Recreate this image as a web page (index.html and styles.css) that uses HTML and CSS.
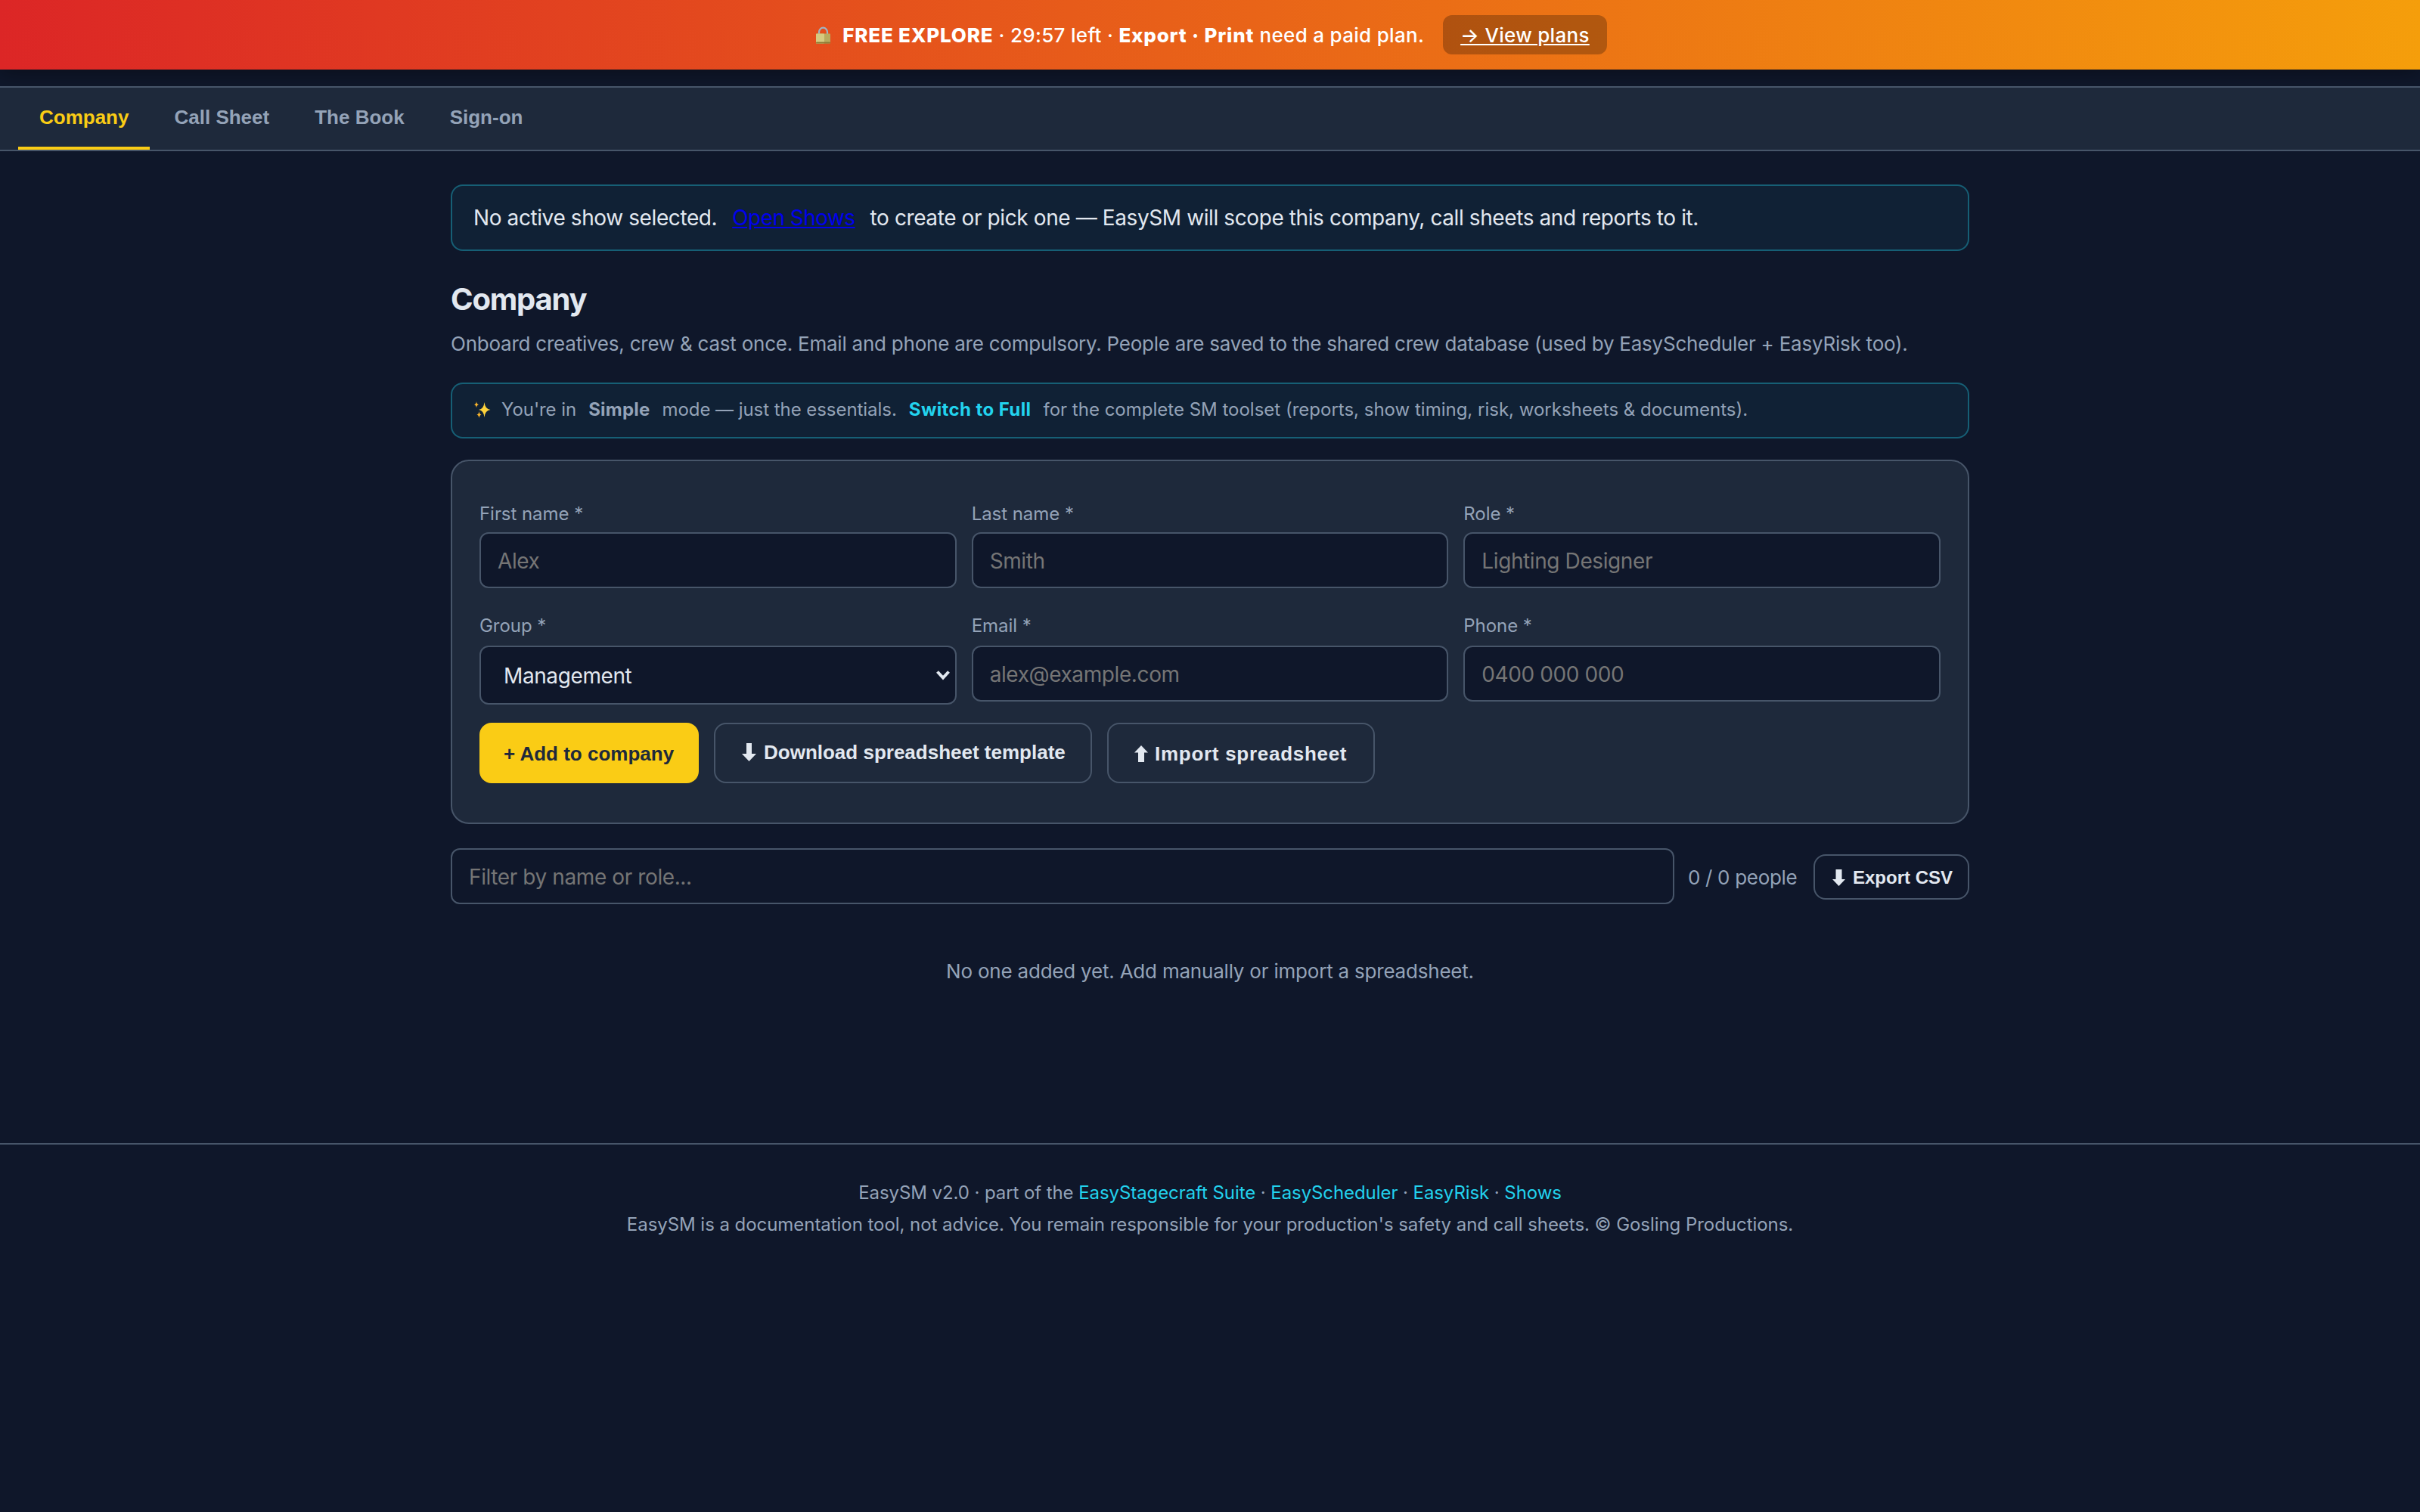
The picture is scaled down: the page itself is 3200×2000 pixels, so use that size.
FILE: index.html
```html
<!DOCTYPE html>
<html lang="en">
<head>
    <meta charset="UTF-8">
    <meta name="viewport" content="width=device-width, initial-scale=1.0">
    <title>EasySM - Company</title>
    <link rel="stylesheet" href="styles.css">
</head>
<body>
    <div class="trial-bar">
        <svg class="lock" viewBox="0 0 19 23">
            <path d="M4 11V7.500a5.500 5.800 0 0 1 11 0V11" fill="none" stroke="#9fb4c4" stroke-width="2.2"/>
            <rect x="0" y="9.5" width="19" height="13" rx="1" fill="#b9ab5e"/>
            <rect x="0" y="9.5" width="11" height="13" rx="1" fill="#d6ca80"/>
            <rect x="0" y="20.5" width="19" height="2" rx="1" fill="#8d7a35"/>
        </svg>
        <div class="trial-text"><strong>FREE EXPLORE</strong> · 29:57 left · <strong>Export · Print</strong> need a paid plan.</div>
        <a class="plans-link" href="#">→ View plans</a>
    </div>

    <nav class="tabs">
        <button class="tab active">Company</button>
        <button class="tab">Call Sheet</button>
        <button class="tab">The Book</button>
        <button class="tab">Sign-on</button>
    </nav>

    <main>
        <div class="notice">
            <span>No active show selected.</span>
            <a class="shows-link" href="#">Open Shows</a>
            <span>to create or pick one — EasySM will scope this company, call sheets and reports to it.</span>
        </div>

        <h1>Company</h1>
        <p class="lead">Onboard creatives, crew &amp; cast once. Email and phone are compulsory. People are saved to the shared crew database (used by EasyScheduler + EasyRisk too).</p>

        <div class="notice mode-notice">
            <svg class="sparkles" viewBox="0 0 22 22">
                <path d="M13.5 1Q14.3 10 21.500 11Q14.300 12 13.500 21Q12.700 12 6 11Q12.700 10 13.500 1Z" fill="#fdd23c"/>
                <path d="M3 0Q3.500 3.800 6 4.300Q3.500 4.800 3 8.500Q2.500 4.800 0 4.300Q2.500 3.800 3 0Z" fill="#fbb52c"/>
                <path d="M6.500 13Q7 17 9.500 17.500Q7 18 6.500 22Q6 18 3.500 17.500Q6 17 6.500 13Z" fill="#fbb52c"/>
            </svg>
            <span>You're in</span>
            <strong>Simple</strong>
            <span>mode — just the essentials.</span>
            <a class="switch-link" href="#">Switch to Full</a>
            <span class="mode-rest">for the complete SM toolset (reports, show timing, risk, worksheets &amp; documents).</span>
        </div>

        <div class="card">
            <div class="form-grid">
                <div class="field">
                    <label for="firstName">First name *</label>
                    <input id="firstName" type="text" placeholder="Alex">
                </div>
                <div class="field">
                    <label for="lastName">Last name *</label>
                    <input id="lastName" type="text" placeholder="Smith">
                </div>
                <div class="field">
                    <label for="role">Role *</label>
                    <input id="role" type="text" placeholder="Lighting Designer">
                </div>
            </div>
            <div class="form-grid form-grid-second">
                <div class="field">
                    <label for="group">Group *</label>
                    <div class="select-wrap">
                        <select id="group">
                            <option>Management</option>
                        </select>
                        <svg class="chevron" viewBox="0 0 20 14"><path d="M2.500 2.500L10 10.500L17.500 2.500" fill="none" stroke="#e2e8f0" stroke-width="4"/></svg>
                    </div>
                </div>
                <div class="field">
                    <label for="email">Email *</label>
                    <input id="email" type="email" placeholder="alex@example.com">
                </div>
                <div class="field">
                    <label for="phone">Phone *</label>
                    <input id="phone" type="tel" placeholder="0400 000 000">
                </div>
            </div>
            <div class="actions">
                <button class="btn btn-primary">+ Add to company</button>
                <button class="btn btn-download">
                    <svg class="arrow-lg" viewBox="0 0 19 24"><path d="M6 0h7v14h6L9.500 24 0 14h6z"/></svg>
                    Download spreadsheet template
                </button>
                <button class="btn btn-import">
                    <svg class="arrow-up" viewBox="0 0 18 22"><path d="M9 0l9 9.500h-5V22H5V9.500H0z"/></svg>
                    Import spreadsheet
                </button>
            </div>
        </div>

        <div class="filter-row">
            <input type="text" placeholder="Filter by name or role...">
            <span class="count">0 / 0 people</span>
            <button class="btn btn-small">
                <svg class="arrow-sm" viewBox="0 0 17 22"><path d="M4.500 0h8v13H17L8.500 22 0 13h4.500z"/></svg>
                Export CSV
            </button>
        </div>

        <div class="empty">No one added yet. Add manually or import a spreadsheet.</div>
    </main>

    <footer>
        <div>EasySM v2.0 · part of the <a href="#">EasyStagecraft Suite</a> · <a href="#">EasyScheduler</a> · <a href="#">EasyRisk</a> · <a href="#">Shows</a></div>
        <div class="legal">EasySM is a documentation tool, not advice. You remain responsible for your production's safety and call sheets. © Gosling Productions.</div>
    </footer>
</body>
</html>
```

FILE: styles.css
```css
* {
    box-sizing: border-box;
}

body {
    margin: 0;
    min-height: 100vh;
    background: #0f172a;
    color: #e2e8f0;
    font-family: Inter, sans-serif;
    font-size: 28px;
    letter-spacing: -0.4px;
}

svg {
    display: block;
    flex-shrink: 0;
}

/* Trial banner */
.trial-bar {
    display: flex;
    align-items: center;
    justify-content: center;
    height: 92px;
    background: linear-gradient(90deg, #dc2626, #f59e0b);
    box-shadow: 0 4px 24px rgba(0,0,0,0.35);
    color: #fff;
    font-size: 26px;
    font-weight: 500;
    letter-spacing: 0.3px;
}

.trial-bar strong {
    font-weight: 800;
    letter-spacing: 0.8px;
}

.lock {
    width: 19px;
    height: 23px;
    margin: 0 16px 0 4px;
}

.plans-link {
    margin-left: 25px;
    padding: 2px 23px 0;
    line-height: 50px;
    border-radius: 12px;
    background: rgba(0,0,0,0.25);
    color: #fff;
    text-decoration: underline;
}

/* Tabs */
.tabs {
    position: relative;
    display: flex;
    gap: 4px;
    height: 86px;
    margin-top: 22px;
    padding: 0 24px;
    background: #1e293b;
    border-top: 2px solid #475569;
    border-bottom: 2px solid #475569;
}

.tab {
    padding: 0 28px;
    border: none;
    border-bottom: 4px solid transparent;
    background: none;
    color: #94a3b8;
    font: bold 26px "Liberation Sans", Arial, sans-serif;
}

.tab.active {
    color: #facc15;
    border-bottom-color: #facc15;
}

main {
    width: 2008px;
    margin: 0 auto;
    padding-top: 44px;
}

/* Notices */
.notice {
    display: flex;
    align-items: center;
    gap: 20px;
    height: 88px;
    padding: 0 28px;
    border: 2px solid rgba(34,211,238,0.35);
    border-radius: 16px;
    background: rgba(34,211,238,0.06);
    white-space: nowrap;
}

.shows-link {
    color: #0000ee;
    letter-spacing: -0.55px;
}

.mode-notice {
    gap: 16px;
    height: 74px;
    margin-bottom: 28px;
    padding-bottom: 3px;
    color: #94a3b8;
    font-size: 24px;
    letter-spacing: -0.05px;
}

.mode-notice strong {
    font-weight: 700;
    letter-spacing: 0.2px;
}

.switch-link {
    color: #22d3ee;
    font-weight: 700;
    letter-spacing: 0.4px;
    text-decoration: none;
}

.mode-rest {
    letter-spacing: 0;
}

.sparkles {
    width: 22px;
    height: 22px;
    margin: 0 -2px 0 1px;
}

h1 {
    margin: 40px 0 16px;
    font-size: 40px;
    font-weight: 700;
    line-height: 48px;
    letter-spacing: -1.2px;
}

.lead {
    margin: 0 0 32px;
    color: #94a3b8;
    font-size: 26px;
    line-height: 38px;
    letter-spacing: -0.23px;
}

/* Form card */
.card {
    padding: 52px 36px 52px;
    border: 2px solid #475569;
    border-radius: 24px;
    background: #1e293b;
}

.form-grid {
    display: grid;
    grid-template-columns: repeat(3, 1fr);
    gap: 20px;
}

label {
    display: block;
    margin-bottom: 6px;
    color: #94a3b8;
    font-size: 24px;
    line-height: 36px;
    letter-spacing: -0.05px;
}

.form-grid-second {
    margin: 32px 0 24px;
}

.form-grid-second label {
    margin-bottom: 8px;
}

input,
select {
    display: block;
    width: 100%;
    height: 74px;
    padding: 1px 22px 0;
    border: 2px solid #475569;
    border-radius: 12px;
    background: #0f172a;
    color: #e2e8f0;
    font: inherit;
    letter-spacing: inherit;
}

input::placeholder {
    color: #757575;
}

.select-wrap {
    position: relative;
}

select {
    appearance: none;
    height: 78px;
    padding: 2px 30px 0;
}

.chevron {
    position: absolute;
    top: 32px;
    right: 8px;
    width: 20px;
    height: 14px;
}

.actions {
    display: flex;
    gap: 20px;
}

.btn {
    display: flex;
    align-items: center;
    height: 80px;
    padding: 0 33px;
    border: 2px solid #475569;
    border-radius: 16px;
    background: transparent;
    color: #e2e8f0;
    font: bold 26px "Liberation Sans", Arial, sans-serif;
    white-space: nowrap;
}

.btn svg {
    fill: #e2e8f0;
}

.btn-primary {
    width: 290px;
    padding: 2px 30px 0;
    border-color: #facc15;
    background: #facc15;
    color: #1e293b;
}

.btn-download {
    width: 500px;
    padding: 0 0 2px 35px;
}

.btn-import {
    width: 354px;
    padding: 2px 0 0 34px;
    letter-spacing: 0.72px;
}

.arrow-lg {
    width: 19px;
    height: 24px;
    margin-right: 10px;
}

.arrow-up {
    width: 18px;
    height: 22px;
    margin-right: 9px;
}

.arrow-sm {
    width: 17px;
    height: 22px;
    margin-right: 10px;
}

/* People list */
.filter-row {
    display: flex;
    align-items: center;
    gap: 20px;
    margin-top: 32px;
}

.filter-row input {
    flex: 1;
}

.count {
    width: 146px;
    margin-left: -2px;
    padding-top: 3px;
    color: #94a3b8;
    font-size: 26px;
    letter-spacing: -0.32px;
    white-space: nowrap;
}

.btn-small {
    width: 206px;
    height: 60px;
    margin-top: 2px;
    padding: 2px 0 0 23px;
    font-size: 24px;
}

.empty {
    margin: 69px 0 207px;
    color: #94a3b8;
    font-size: 26px;
    line-height: 40px;
    letter-spacing: -0.21px;
    text-align: center;
}

footer {
    padding-top: 43px;
    border-top: 2px solid #475569;
    color: #94a3b8;
    font-size: 24px;
    line-height: 42px;
    letter-spacing: -0.08px;
    text-align: center;
}

footer a {
    color: #22d3ee;
    text-decoration: none;
}

.legal {
    letter-spacing: -0.05px;
}
```
